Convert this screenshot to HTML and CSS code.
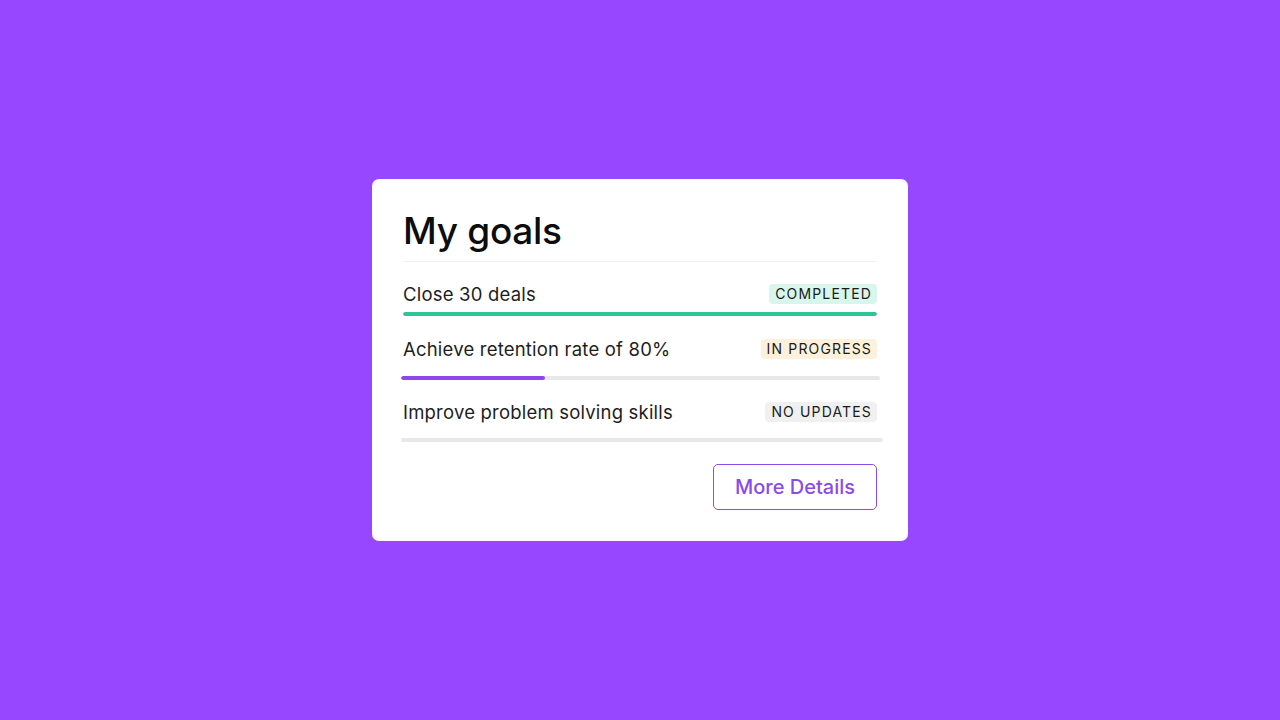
FILE: index.html
```html
<!DOCTYPE html>
<html>
<head>
<meta charset="utf-8">
<link rel="stylesheet" href="styles.css">
</head>
<body>
<main class="stage">
  <section class="card">
    <h1 class="title">My goals</h1>
    <ul class="goals">
      <li class="goal goal-1">
        <div class="goal-head">
          <span class="goal-name">Close 30 deals</span>
          <span class="badge badge-done">COMPLETED</span>
        </div>
        <div class="bar bar-1"><div class="fill fill-done" style="width:100%"></div></div>
      </li>
      <li class="goal goal-2">
        <div class="goal-head">
          <span class="goal-name">Achieve retention rate of 80%</span>
          <span class="badge badge-progress">IN PROGRESS</span>
        </div>
        <div class="bar bar-2"><div class="fill fill-progress" style="width:30%"></div></div>
      </li>
      <li class="goal goal-3">
        <div class="goal-head">
          <span class="goal-name">Improve problem solving skills</span>
          <span class="badge badge-none">NO UPDATES</span>
        </div>
        <div class="bar bar-3"></div>
      </li>
    </ul>
    <div class="actions">
      <button class="btn">More Details</button>
    </div>
  </section>
</main>
</body>
</html>
```
FILE: styles.css
```css
* { box-sizing: border-box; }
html, body { margin: 0; padding: 0; }
body {
  background: #9747ff;
  font-family: Inter, "Noto Sans", sans-serif;
  color: #1e1e1e;
}
.stage {
  width: 1280px;
  height: 720px;
  display: flex;
  align-items: center;
  justify-content: center;
}
.card {
  width: 536px;
  height: 362px;
  background: #ffffff;
  border-radius: 7px;
  padding: 30px 31px 0 31px;
  display: flex;
  flex-direction: column;
}
.title {
  margin: 0;
  font-size: 37px;
  font-weight: 500;
  line-height: 44px;
  letter-spacing: -0.3px;
  color: #0d0d0d;
  padding-bottom: 8px;
  border-bottom: 1px solid #f0f0f0;
}
.goals {
  list-style: none;
  margin: 0;
  padding: 0;
}
.goal-head {
  display: flex;
  justify-content: space-between;
  align-items: center;
  height: 20px;
}
.goal-name {
  font-size: 18.5px;
  font-weight: 400;
  letter-spacing: 0.2px;
}
.badge {
  font-size: 14px;
  font-weight: 400;
  letter-spacing: 1.15px;
  padding: 0 5px 0 6px;
  height: 20px;
  line-height: 20px;
  border-radius: 4px;
  color: #1a1a1a;
}
.badge-done { background: #d9f6ec; }
.badge-progress { background: #fdf1db; }
.badge-none { background: #f0f0f0; }
.goal-1 { margin-top: 22px; }
.goal-2 { margin-top: 23px; }
.goal-3 { margin-top: 22px; }
.bar {
  height: 4px;
  border-radius: 2px;
  background: #e8e8e8;
  overflow: hidden;
}
.bar-1 { margin-top: 8px; }
.bar-2 { margin-top: 17px; margin-left: -2px; margin-right: -3px; }
.bar-3 { margin-top: 16px; margin-left: -2px; margin-right: -6px; }
.fill { height: 100%; border-radius: 2px; }
.fill-done { background: #2fc493; }
.fill-progress { background: #8c48e8; }
.actions {
  display: flex;
  justify-content: flex-end;
  margin-top: 22px;
}
.btn {
  width: 164px;
  height: 46px;
  border: 1.5px solid #8c4be6;
  border-radius: 5px;
  background: #fff;
  color: #8c4be6;
  font-family: Inter, "Noto Sans", sans-serif;
  font-size: 20px;
  font-weight: 450;
  padding: 0;
}
```
